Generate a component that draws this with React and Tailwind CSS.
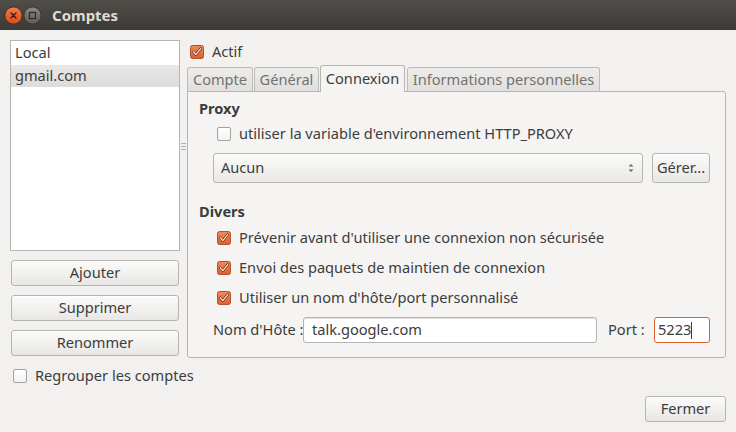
const font = { fontFamily: '"Noto Sans", "DejaVu Sans", sans-serif' };

function Check({ checked }) {
    if (!checked) {
        return (
            <span className="inline-block w-[14px] h-[14px] shrink-0 rounded-[2px] border border-[#a3a29f] bg-gradient-to-b from-white to-[#f4f3f2]" />
        );
    }
    return (
        <svg width="14" height="14" viewBox="0 0 14 14" className="shrink-0">
            <defs>
                <linearGradient id="cb" x1="0" y1="0" x2="0" y2="1">
                    <stop offset="0" stopColor="#f08a5d" />
                    <stop offset="1" stopColor="#dd5f2f" />
                </linearGradient>
            </defs>
            <rect x="0.5" y="0.5" width="13" height="13" rx="2" fill="url(#cb)" stroke="#b4502b" />
            <path d="M3.2 6.8 L5.8 9.6 L10.8 3.6" fill="none" stroke="#6b2c14" strokeWidth="2.6" strokeLinecap="round" strokeLinejoin="round" />
            <path d="M3.2 6.8 L5.8 9.6 L10.8 3.6" fill="none" stroke="#fbe6dc" strokeWidth="1.3" strokeLinecap="round" strokeLinejoin="round" />
        </svg>
    );
}

function Btn({ children, className = '' }) {
    return (
        <div className={`flex items-center justify-center h-[26px] rounded-[3px] border border-[#b5b4b0] bg-gradient-to-b from-[#fbfbfa] to-[#e8e7e5] text-[#3c3c3c] shadow-[inset_0_1px_0_#ffffff] ${className}`}>
            {children}
        </div>
    );
}

function CheckRow({ checked, label, className = '' }) {
    return (
        <div className={`flex items-center gap-[8px] h-[20px] whitespace-nowrap ${className}`}>
            <Check checked={checked} />
            <span>{label}</span>
        </div>
    );
}

export default function App() {
    const tabs = [
        { name: 'Compte', w: 'w-[66px]' },
        { name: 'Général', w: 'w-[65px]' },
        { name: 'Connexion', w: 'w-[85px]', active: true },
        { name: 'Informations personnelles', w: 'w-[193px]' },
    ];

    return (
        <div className="w-[736px] h-[432px] bg-[#f2f1f0] flex flex-col overflow-hidden text-[14.6px] text-[#3c3c3c]" style={font}>
            {/* title bar */}
            <div className="h-[30px] shrink-0 flex items-center bg-gradient-to-b from-[#4f4e49] to-[#3b3a36] pl-[4px]">
                <svg width="19" height="19" viewBox="0 0 19 19">
                    <defs>
                        <linearGradient id="cl" x1="0" y1="0" x2="0" y2="1">
                            <stop offset="0" stopColor="#f37a4c" />
                            <stop offset="1" stopColor="#de4b17" />
                        </linearGradient>
                    </defs>
                    <circle cx="9.5" cy="9.5" r="8.6" fill="url(#cl)" stroke="#2e2d2a" strokeWidth="0.8" />
                    <path d="M7 7 L12 12 M12 7 L7 12" stroke="#3a1a0d" strokeWidth="1.4" strokeLinecap="round" />
                </svg>
                <svg width="19" height="19" viewBox="0 0 19 19">
                    <defs>
                        <linearGradient id="mx" x1="0" y1="0" x2="0" y2="1">
                            <stop offset="0" stopColor="#8a8984" />
                            <stop offset="1" stopColor="#5d5c58" />
                        </linearGradient>
                    </defs>
                    <circle cx="9.5" cy="9.5" r="8.6" fill="url(#mx)" stroke="#2e2d2a" strokeWidth="0.8" />
                    <rect x="6.5" y="6.5" width="6" height="6" fill="none" stroke="#2f2e2b" strokeWidth="1.3" />
                </svg>
                <span className="ml-[10px] font-bold text-[15px] text-[#dfdbd2]">Comptes</span>
            </div>

            {/* body */}
            <div className="flex-1 flex flex-col px-[10px] pt-[10px]">
                <div className="flex h-[346px]">
                    {/* left column */}
                    <div className="w-[170px] flex flex-col">
                        <div className="h-[213px] bg-white border border-[#b6b5b2] flex flex-col">
                            <div className="h-[24px] flex items-center px-[4px]">Local</div>
                            <div className="h-[22px] flex items-center px-[4px] bg-gradient-to-b from-[#e9e8e6] to-[#dddcda]">gmail.com</div>
                        </div>
                        <div className="mx-[1px] mt-[9px] flex flex-col gap-[9px]">
                            <Btn>Ajouter</Btn>
                            <Btn>Supprimer</Btn>
                            <Btn>Renommer</Btn>
                        </div>
                        <CheckRow className="mt-[10px] ml-[3px]" label="Regrouper les comptes" />
                    </div>

                    {/* splitter */}
                    <div className="w-[7px] flex flex-col items-center justify-center gap-[2px] h-[213px]">
                        <div className="w-[5px] h-[1px] bg-[#b0afac]" />
                        <div className="w-[5px] h-[1px] bg-[#b0afac]" />
                        <div className="w-[5px] h-[1px] bg-[#b0afac]" />
                    </div>

                    {/* right column */}
                    <div className="flex-1 flex flex-col">
                        <CheckRow checked className="ml-[3px] mt-[2px]" label="Actif" />
                        <div className="flex items-end mt-[2px] h-[27px]">
                            {tabs.map((t) =>
                                t.active ? (
                                    <div key={t.name} className={`${t.w} h-[27px] mr-[2px] -mb-[1px] z-10 flex items-center justify-center rounded-t-[3px] border border-b-0 border-[#b6b5b2] bg-[#f5f4f3] text-[#3c3c3c]`}>
                                        {t.name}
                                    </div>
                                ) : (
                                    <div key={t.name} className={`${t.w} h-[24px] mr-[1px] flex items-center justify-center rounded-t-[3px] border border-b-0 border-[#bdbcb9] bg-gradient-to-b from-[#eeedeb] to-[#e0dfdd] text-[#737270] whitespace-nowrap`}>
                                        {t.name}
                                    </div>
                                )
                            )}
                        </div>
                        <div className="h-[267px] border border-[#b6b5b2] rounded-b-[3px] rounded-tr-[3px] bg-[#f5f4f3] flex flex-col pl-[11px] pr-[15px]">
                            <div className="h-[20px] mt-[7px] flex items-center font-bold">Proxy</div>
                            <CheckRow className="mt-[5px] ml-[18px]" label="utiliser la variable d'environnement HTTP_PROXY" />
                            <div className="mt-[9px] ml-[14px] flex gap-[9px]">
                                <div className="flex-1 h-[30px] rounded-[3px] border border-[#b5b4b0] bg-gradient-to-b from-[#fbfbfa] to-[#e9e8e6] flex items-center px-[7px] justify-between">
                                    <span>Aucun</span>
                                    <svg width="8" height="12" viewBox="0 0 8 12">
                                        <path d="M1.5 4.5 L4 2 L6.5 4.5 Z" fill="#6c6b68" />
                                        <path d="M1.5 7.5 L4 10 L6.5 7.5 Z" fill="#6c6b68" />
                                    </svg>
                                </div>
                                <Btn className="w-[58px] h-[30px]">Gérer...</Btn>
                            </div>
                            <div className="h-[20px] mt-[19px] flex items-center font-bold">Divers</div>
                            <div className="ml-[18px] mt-[6px] flex flex-col gap-[10px]">
                                <CheckRow checked label="Prévenir avant d'utiliser une connexion non sécurisée" />
                                <CheckRow checked label="Envoi des paquets de maintien de connexion" />
                                <CheckRow checked label="Utiliser un nom d'hôte/port personnalisé" />
                            </div>
                            <div className="mt-[9px] ml-[14px] flex items-center h-[26px]">
                                <span className="w-[90px] whitespace-nowrap">Nom d'Hôte :</span>
                                <div className="flex-1 h-[26px] rounded-[3px] border border-[#b5b4b0] bg-white shadow-[inset_0_1px_1px_#e3e2e0] flex items-center px-[8px]">
                                    talk.google.com
                                </div>
                                <span className="ml-[11px] w-[46px]">Port :</span>
                                <div className="w-[56px] h-[26px] rounded-[3px] border border-[#e0602f] bg-white flex items-center px-[3px]">
                                    <span>5223</span>
                                    <span className="w-[1px] h-[17px] bg-[#3c3c3c]" />
                                </div>
                            </div>
                        </div>
                    </div>
                </div>

                {/* footer */}
                <div className="flex justify-end mt-[10px]">
                    <Btn className="w-[81px]">Fermer</Btn>
                </div>
            </div>
        </div>
    );
}
